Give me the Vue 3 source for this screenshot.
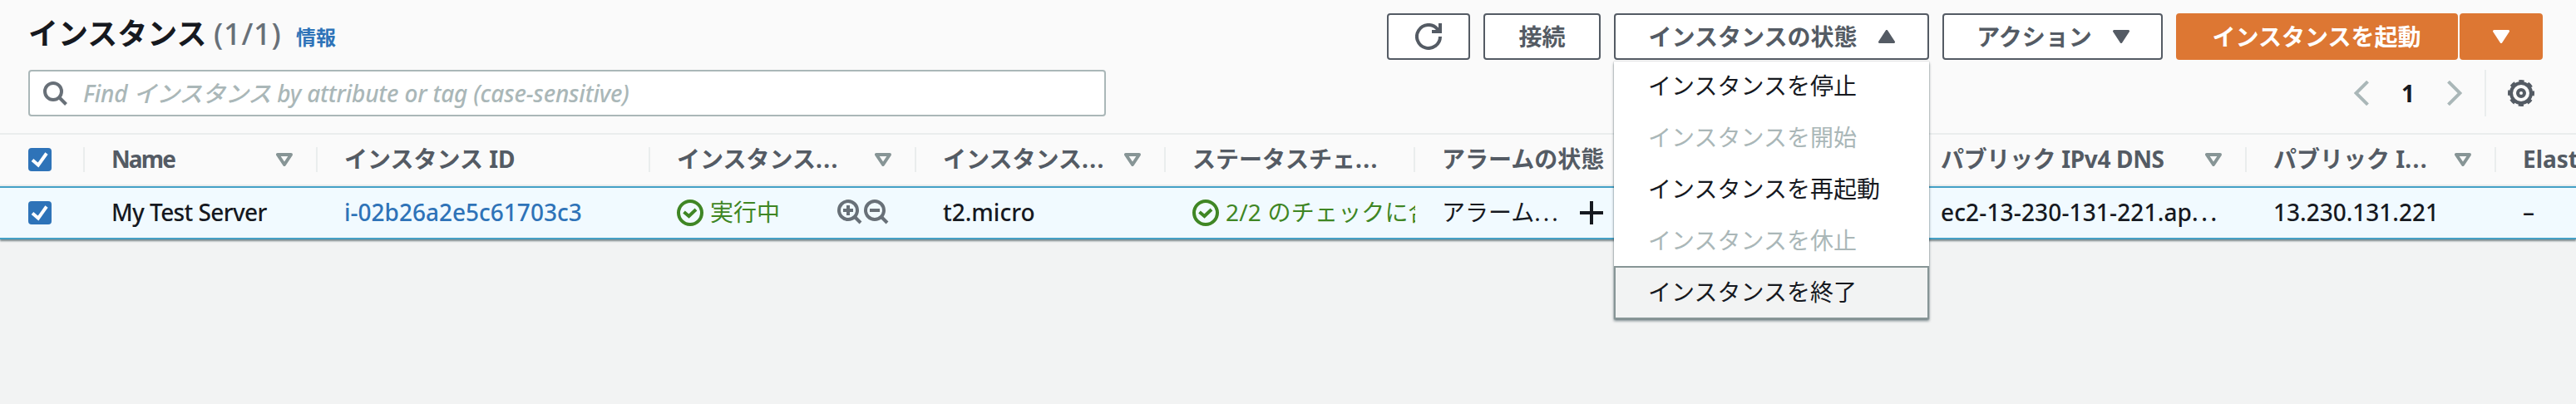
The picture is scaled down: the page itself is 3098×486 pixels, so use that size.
<script setup>
const columns = [
  { key: 'name', label: 'Name', width: 280, sort: true },
  { key: 'id', label: 'インスタンス ID', width: 400 },
  { key: 'state', label: 'インスタンス', cut: true, width: 320, sort: true },
  { key: 'type', label: 'インスタンス', cut: true, width: 300, sort: true },
  { key: 'status', label: 'ステータスチェ', cut: true, width: 300 },
  { key: 'alarm', label: 'アラームの状態', width: 600 },
  { key: 'dns', label: 'パブリック IPv4 DNS', width: 400, sort: true },
  { key: 'ip', label: 'パブリック I', cut: true, width: 300, sort: true },
  { key: 'elastic', label: 'Elastic IP', width: 300 },
]
const menu = [
  { label: 'インスタンスを停止' },
  { label: 'インスタンスを開始', disabled: true },
  { label: 'インスタンスを再起動' },
  { label: 'インスタンスを休止', disabled: true },
  { label: 'インスタンスを終了', active: true },
]
</script>

<template>
  <div class="page">
    <div class="panel">
      <header class="toolbar">
        <h1><span class="title">インスタンス</span><span class="count">(1/1)</span><a class="info">情報</a></h1>
        <div class="actions">
          <button class="btn refresh">
            <svg width="32" height="32" viewBox="0 0 32 32" fill="none" stroke="currentColor" stroke-width="4">
              <path d="M30 16A14 14 0 1 1 26.500 6.700L30 10" />
              <path d="M20 10H30V0" />
            </svg>
          </button>
          <button class="btn connect">接続</button>
          <div class="dropdown">
            <button class="btn state-btn">
              <span>インスタンスの状態</span>
              <svg width="20" height="16" viewBox="0 0 20 16"><path d="M10 1.500L18.500 14.500H1.500Z" fill="currentColor" stroke="currentColor" stroke-width="3" stroke-linejoin="round" /></svg>
            </button>
            <ul class="menu">
              <li v-for="m in menu" :key="m.label" :class="{ disabled: m.disabled, active: m.active }">{{ m.label }}</li>
            </ul>
          </div>
          <button class="btn action-btn">
            <span>アクション</span>
            <svg width="20" height="16" viewBox="0 0 20 16"><path d="M10 14.500L18.500 1.500H1.500Z" fill="currentColor" stroke="currentColor" stroke-width="3" stroke-linejoin="round" /></svg>
          </button>
          <div class="split">
            <button class="btn primary launch">インスタンスを起動</button>
            <button class="btn primary more">
              <svg width="20" height="16" viewBox="0 0 20 16"><path d="M10 14.500L18.500 1.500H1.500Z" fill="currentColor" stroke="currentColor" stroke-width="3" stroke-linejoin="round" /></svg>
            </button>
          </div>
        </div>
      </header>

      <div class="filters">
        <div class="search">
          <svg width="32" height="32" viewBox="0 0 32 32" fill="none" stroke="#687078" stroke-width="4">
            <circle cx="14" cy="14" r="10" /><path d="M21 21l8.500 8.500" />
          </svg>
          <span class="placeholder">Find インスタンス by attribute or tag (case-sensitive)</span>
        </div>
        <div class="pager">
          <svg width="18" height="30" viewBox="0 0 18 30" fill="none" stroke="#aab7b8" stroke-width="4"><path d="M16.500 1.200L2.500 15L16.500 28.800" /></svg>
          <span class="page-no">1</span>
          <svg width="18" height="30" viewBox="0 0 18 30" fill="none" stroke="#aab7b8" stroke-width="4"><path d="M1.500 1.200L15.500 15L1.500 28.800" /></svg>
          <div class="gear">
            <svg width="32" height="32" viewBox="0 0 32 32" fill="none" stroke="#545b64">
              <circle cx="16" cy="16" r="12" stroke-width="4" />
              <circle cx="16" cy="16" r="14.300" stroke-width="3.400" stroke-dasharray="6.200 5.031" stroke-dashoffset="3.100" />
              <circle cx="16" cy="16" r="4" stroke-width="4" />
            </svg>
          </div>
        </div>
      </div>

      <div class="row head">
        <div class="cell check"><span class="box"><svg width="28" height="28" viewBox="0 0 28 28" fill="none" stroke="#fff" stroke-width="4"><path d="M5 14.500L12 20.500L22 6.500" /></svg></span></div>
        <div v-for="c in columns" :key="c.key" class="cell" :class="'h-' + c.key" :style="{ width: c.width + 'px' }">
          <span class="label">{{ c.label }}<span v-if="c.cut" class="dots">...</span></span>
          <svg v-if="c.sort" class="sort" width="20" height="16" viewBox="0 0 20 16"><path d="M2 2H18L10 14Z" fill="none" stroke="#879596" stroke-width="4" stroke-linejoin="round" /></svg>
        </div>
      </div>

      <div class="row body">
        <div class="cell check"><span class="box"><svg width="28" height="28" viewBox="0 0 28 28" fill="none" stroke="#fff" stroke-width="4"><path d="M5 14.500L12 20.500L22 6.500" /></svg></span></div>
        <div v-for="c in columns" :key="c.key" class="cell" :class="c.key" :style="{ width: c.width + 'px' }">
          <span v-if="c.key === 'name'" class="t">My Test Server</span>
          <a v-else-if="c.key === 'id'" class="t">i-02b26a2e5c61703c3</a>
          <template v-else-if="c.key === 'state' || c.key === 'status'">
            <svg class="ok" width="32" height="32" viewBox="0 0 32 32" fill="none" stroke="#3f8624"><circle cx="16" cy="16" r="14" stroke-width="4" /><path d="M8.500 15L14.500 20L23 12" stroke-width="4" /></svg>
            <span class="green">{{ c.key === 'state' ? '実行中' : '2/2 のチェックに合格しました' }}</span>
            <span v-if="c.key === 'state'" class="lens">
              <svg v-for="d in ['M7 13H19M13 7V19', 'M7 13H19']" :key="d" width="32" height="32" viewBox="0 0 32 32" fill="none" stroke="#687078" stroke-width="4"><circle cx="13" cy="13" r="11" stroke-width="4" /><path :d="d" /><path d="M20.500 20.500L28 28" /></svg>
            </span>
          </template>
          <span v-else-if="c.key === 'type'" class="t">t2.micro</span>
          <template v-else-if="c.key === 'alarm'">
            <span class="alarm-text">アラーム<span class="wide-dots">...</span></span>
            <svg class="plus" width="28" height="28" viewBox="0 0 28 28" stroke="#16191f" stroke-width="4"><path d="M0 14H28M14 0V28" /></svg>
          </template>
          <span v-else-if="c.key === 'dns'" class="t">ec2-13-230-131-221.ap<span class="wide-dots">...</span></span>
          <span v-else-if="c.key === 'ip'" class="t">13.230.131.221</span>
          <span v-else class="t">–</span>
        </div>
      </div>
    </div>
  </div>
</template>

<style>
body { background: #f2f3f3; overflow: hidden; }
</style>

<style scoped>
.page { width: 3098px; height: 486px; overflow: hidden; background: #f2f3f3; font-family: "Noto Sans", "Noto Sans CJK JP", sans-serif; font-size: 28px; line-height: 44px; color: #16191f; }
.page, .page * { box-sizing: border-box; }
.panel { height: 288px; background: #fafafa; box-shadow: 0 2px 2px rgba(0, 28, 36, 0.5); }
.toolbar { display: flex; justify-content: space-between; align-items: flex-start; height: 84px; padding: 16px 40px 0 34px; }
h1 { display: flex; align-items: baseline; margin: 0; font-size: 36px; line-height: 50px; }
.title { width: 223px; white-space: nowrap; }
.count { width: 99px; color: #687078; font-weight: 500; letter-spacing: 0.8px; }
.info { color: #2e73b8; font-size: 24px; font-weight: 700; }
.actions { display: flex; gap: 16px; }
.btn { display: flex; align-items: center; justify-content: center; height: 56px; padding: 0; margin: 0; background: #fff; border: 2px solid #545b64; border-radius: 4px; color: #545b64; font: 700 28px/44px "Noto Sans", "Noto Sans CJK JP", sans-serif; white-space: nowrap; }
.refresh { width: 100px; }
.connect { width: 141px; }
.state-btn { width: 379px; gap: 26px; padding-left: 1px; }
.action-btn { width: 265px; gap: 25px; padding-left: 1px; }
.split { display: flex; gap: 2px; }
.primary { background: #dd7733; border-color: #dd7733; color: #fff; }
.launch { width: 339px; padding-right: 1px; }
.more { width: 100px; }
.dropdown { position: relative; }
.menu { position: absolute; top: 58px; left: 0; width: 379px; z-index: 2; margin: 0; padding: 0; list-style: none; background: #fff; box-shadow: 0 2px 3px rgba(0, 28, 36, 0.5), 0 0 1px rgba(0, 28, 36, 0.4); }
.menu li { height: 62px; padding: 9px 41px; line-height: 44px; white-space: nowrap; }
.menu li:first-child { height: 60px; padding-top: 7px; }
.menu .disabled { color: #aab7b8; }
.menu li.active { height: 64px; padding: 7px 39px; background: #f2f3f3; border: 2px solid #879596; }
.filters { display: flex; justify-content: space-between; height: 76px; padding: 0 50px 0 34px; }
.search { display: flex; align-items: center; width: 1296px; height: 56px; padding-left: 14px; background: #fff; border: 2px solid #aab7b8; border-radius: 4px; }
.placeholder { margin-left: 18px; color: #aab7b8; font-style: italic; font-weight: 500; letter-spacing: -0.2px; white-space: nowrap; }
.pager { display: flex; align-items: center; height: 56px; }
.page-no { width: 94px; text-align: center; font-weight: 700; }
.gear { display: flex; align-items: center; justify-content: flex-end; width: 60px; height: 56px; margin-left: 27px; border-left: 2px solid #eaeded; }
.row { display: flex; width: 3402px; height: 64px; }
.head { border-top: 2px solid #eaeded; border-bottom: 2px solid #eaeded; color: #545b64; font-weight: 700; }
.body { background: #f1faff; border-top: 2px solid #44a0c6; border-bottom: 2px solid #44a0c6; }
.cell { display: flex; align-items: center; flex: none; padding-left: 32px; overflow: hidden; white-space: nowrap; }
.cell.check { width: 102px; padding-left: 34px; }
.head .cell { background: linear-gradient(#eaeded, #eaeded) right 0 center / 2px 30px no-repeat; }
.label, .t, .green, .alarm-text { margin-bottom: 2px; }
.t { font-weight: 500; }
.dots { letter-spacing: 1.4px; }
.wide-dots { letter-spacing: 3px; }
.h-name .label { letter-spacing: -1.9px; }
.h-dns .label { letter-spacing: -0.35px; }
.name .t { letter-spacing: -0.6px; }
.dns .t { letter-spacing: 0.15px; }
.dns .wide-dots { letter-spacing: 3.6px; }
.status .green { letter-spacing: 0.2px; font-weight: 400; }
.sort { margin-left: auto; margin-right: 30px; }
.box { display: flex; width: 28px; height: 28px; background: #2e73b8; border-radius: 4px; }
a { color: #2e73b8; }
.green { color: #3f8624; margin-left: 8px; }
.ok { flex: none; }
.lens { display: flex; margin-left: auto; margin-right: 31px; }
.alarm-text { flex: none; width: 166px; }
</style>
